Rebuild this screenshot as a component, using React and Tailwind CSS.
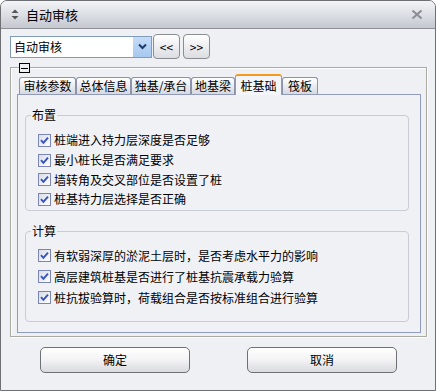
import React from "react";

function Check({ label, h }) {
  return (
    <div className={`flex items-center ${h}`}>
      <span className="w-[13px] h-[13px] border border-[#7c86b4] bg-gradient-to-br from-[#d9dce6] to-white flex items-center justify-center shrink-0">
        <svg width="9" height="9" viewBox="0 0 9 9">
          <path d="M1 4.2 L3.4 6.8 L8 1.6" stroke="#3552c4" strokeWidth="1.9" fill="none" />
        </svg>
      </span>
      <span className="ml-[3px] leading-none">{label}</span>
    </div>
  );
}

function Tab({ label, w, selected }) {
  if (selected) {
    return (
      <div
        className={`${w} h-[21px] -mb-[1px] relative z-10 flex items-center justify-center bg-[#f4f5f9] border border-[#919bbd] border-b-0 rounded-t-[3px] border-t-[2px] border-t-[#f59a1d]`}
      >
        <span className="leading-none">{label}</span>
      </div>
    );
  }
  return (
    <div
      className={`${w} h-[17px] flex items-center justify-center bg-gradient-to-b from-white to-[#d7d9e0] border border-[#8c93ab] border-b-0 rounded-t-[3px]`}
    >
      <span className="leading-none">{label}</span>
    </div>
  );
}

export default function App() {
  return (
    <div className="w-[436px] h-[391px] bg-white">
      <div className="w-[436px] h-[391px] border border-[#6e6f73] rounded-t-[7px] bg-[#eef0f4] flex flex-col overflow-hidden text-[12px] text-black font-['Noto_Sans_CJK_SC',sans-serif]">
        {/* title bar */}
        <div className="h-[28px] shrink-0 flex items-center bg-gradient-to-b from-[#f3f4f6] via-[#dcdfe4] to-[#c4c8cf] border-b border-[#8e9096]">
          <svg width="8" height="11" viewBox="0 0 8 11" className="ml-[10px]">
            <path d="M4 0.5 L7.5 4 L0.5 4 Z" fill="#555" />
            <path d="M4 10.5 L7.5 7 L0.5 7 Z" fill="#555" />
          </svg>
          <span className="ml-[7px] text-[13px] leading-none">自动审核</span>
          <div className="flex-1" />
          <svg width="12" height="11" viewBox="0 0 12 11" className="mr-[12px]">
            <path d="M1.5 1.5 L10.5 9.5 M10.5 1.5 L1.5 9.5" stroke="#8c8f96" strokeWidth="2.2" />
          </svg>
        </div>

        {/* combo row */}
        <div className="flex items-center mt-[5px] ml-[9px] h-[25px]">
          <div className="w-[142px] h-[22px] border border-[#7f9db9] bg-white flex items-center">
            <span className="ml-[3px] leading-none flex-1">自动审核</span>
            <div className="w-[18px] h-[20px] bg-gradient-to-b from-[#c5dcf7] to-[#a7c8ef] flex items-center justify-center mr-[0px]">
              <svg width="9" height="7" viewBox="0 0 9 7">
                <path d="M1 1.5 L4.5 5 L8 1.5" stroke="#1d3b6b" strokeWidth="2" fill="none" />
              </svg>
            </div>
          </div>
          <div className="ml-[1px] w-[27px] h-[25px] rounded-[4px] border border-[#8b8c90] bg-gradient-to-b from-white to-[#dcdde2] flex items-center justify-center">
            <span className="leading-none text-[12px]">&lt;&lt;</span>
          </div>
          <div className="ml-[3px] w-[27px] h-[25px] rounded-[4px] border border-[#8b8c90] bg-gradient-to-b from-white to-[#dcdde2] flex items-center justify-center">
            <span className="leading-none text-[12px]">&gt;&gt;</span>
          </div>
        </div>

        {/* outer frame */}
        <div className="relative mt-[8px] ml-[9px] w-[417px] h-[270px] border border-[#a9a9a2] shadow-[inset_1px_1px_0_white,1px_1px_0_white] pt-[6px] pl-[6px] pr-[5px] pb-[3px] flex flex-col">
          <div className="absolute -top-[5px] left-[8px] w-[11px] h-[10px] bg-[#eef0f4] border border-black flex items-center justify-center">
            <div className="w-[7px] h-[1px] bg-black" />
          </div>
          {/* tab strip */}
          <div className="flex items-end h-[20px] ml-[2px]">
            <Tab label="审核参数" w="w-[57px]" />
            <Tab label="总体信息" w="w-[55px]" />
            <Tab label="独基/承台" w="w-[60px]" />
            <Tab label="地基梁" w="w-[44px]" />
            <Tab label="桩基础" w="w-[47px]" selected />
            <Tab label="筏板" w="w-[36px]" />
          </div>
          {/* panel */}
          <div className="flex-1 border border-[#919bbd] bg-[#f0f1f5] pl-[7px] pr-[11px] pt-[20px]">
            <div className="relative border border-[#c9ccd6] rounded-[4px] pl-[12px] pt-[14px] h-[96px]">
              <span className="absolute -top-[8px] left-[5px] px-[1px] bg-[#f0f1f5] leading-[14px]">布置</span>
              <Check h="h-[20px]" label="桩端进入持力层深度是否足够" />
              <Check h="h-[20px]" label="最小桩长是否满足要求" />
              <Check h="h-[19px]" label="墙转角及交叉部位是否设置了桩" />
              <Check h="h-[20px]" label="桩基持力层选择是否正确" />
            </div>
            <div className="relative mt-[20px] border border-[#c9ccd6] rounded-[4px] pl-[12px] pt-[13px] h-[91px]">
              <span className="absolute -top-[8px] left-[5px] px-[1px] bg-[#f0f1f5] leading-[14px]">计算</span>
              <Check h="h-[21px]" label="有软弱深厚的淤泥土层时，是否考虑水平力的影响" />
              <Check h="h-[21px]" label="高层建筑桩基是否进行了桩基抗震承载力验算" />
              <Check h="h-[21px]" label="桩抗拔验算时，荷载组合是否按标准组合进行验算" />
            </div>
          </div>
        </div>

        {/* buttons */}
        <div className="flex mt-[10px] ml-[39px]">
          <div className="w-[150px] h-[26px] rounded-[5px] border border-[#6f7074] bg-gradient-to-b from-white via-[#f3f3f5] to-[#d9dadf] flex items-center justify-center">
            <span className="leading-none">确定</span>
          </div>
          <div className="ml-[57px] w-[150px] h-[26px] rounded-[5px] border border-[#6f7074] bg-gradient-to-b from-white via-[#f3f3f5] to-[#d9dadf] flex items-center justify-center">
            <span className="leading-none">取消</span>
          </div>
        </div>
      </div>
    </div>
  );
}
